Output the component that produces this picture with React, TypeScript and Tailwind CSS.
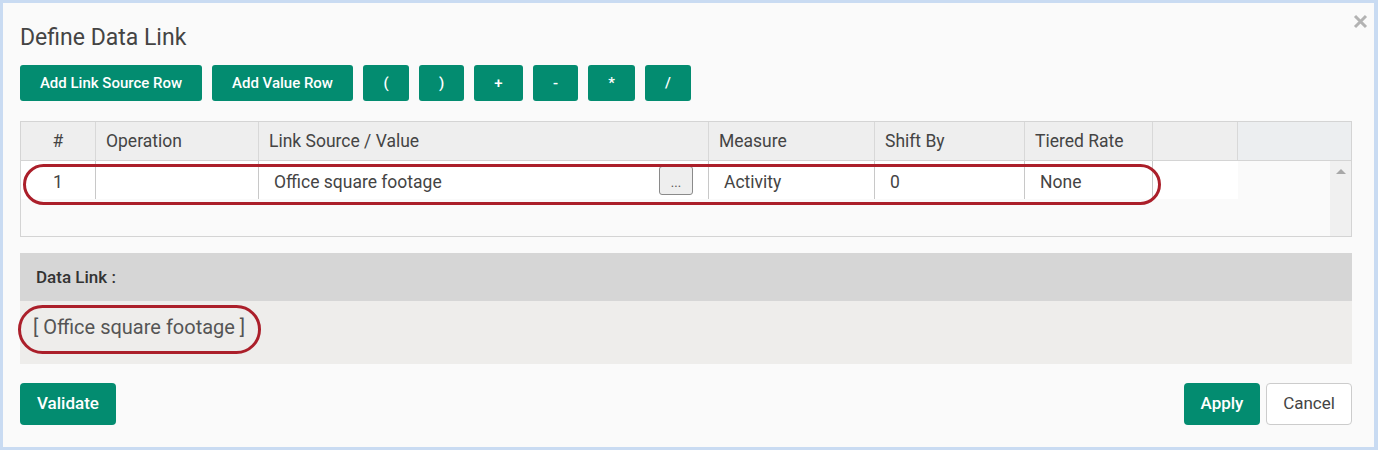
// Define Data Link dialog
const font = { fontFamily: 'Roboto, "Liberation Sans", sans-serif' };

const opButtons = [
  { label: 'Add Link Source Row', w: 'w-[182px]' },
  { label: 'Add Value Row', w: 'w-[141px]' },
  { label: '(', w: 'w-[46px]' },
  { label: ')', w: 'w-[45px]' },
  { label: '+', w: 'w-[49px]' },
  { label: '-', w: 'w-[45px]' },
  { label: '*', w: 'w-[47px]' },
  { label: '/', w: 'w-[46px]' },
];

const columns = [
  { label: '#', w: 'w-[75px]', center: true },
  { label: 'Operation', w: 'w-[163px]' },
  { label: 'Link Source / Value', w: 'w-[450px]' },
  { label: 'Measure', w: 'w-[166px]' },
  { label: 'Shift By', w: 'w-[150px]' },
  { label: 'Tiered Rate', w: 'w-[128px]' },
  { label: '', w: 'w-[85px]' },
];

export default function App() {
  return (
    <div className="w-[1378px] h-[450px] bg-[#c9dbf2] p-[3px] pr-[4px]" style={font}>
      <div className="relative w-full h-full bg-[#fafafa] px-[17px] pt-[20px]">
        {/* Close */}
        <button className="absolute right-[6px] top-[11px] w-[15px] h-[15px]">
          <svg viewBox="0 0 15 15" className="w-[15px] h-[15px]">
            <path d="M2 2 L13 13 M13 2 L2 13" stroke="#b3b3b3" strokeWidth="3" />
          </svg>
        </button>

        {/* Title */}
        <h2 className="text-[23px] leading-[30px] text-[#444] font-normal">Define Data Link</h2>

        {/* Operation buttons */}
        <div className="flex gap-[10px] mt-[12px]">
          {opButtons.map((b) => (
            <button
              key={b.label}
              className={`${b.w} h-[36px] rounded-[3px] bg-[#038c70] text-white text-[15px] font-medium`}
            >
              {b.label}
            </button>
          ))}
        </div>

        {/* Table */}
        <div className="mt-[20px] w-[1332px] h-[116px] border border-[#d4d4d4] bg-[#fafafa] flex flex-col">
          <div className="flex h-[39px] border-b border-[#d4d4d4] bg-[#eeeeee]">
            {columns.map((c, i) => (
              <div
                key={i}
                className={`${c.w} h-full flex items-center border-r border-[#d8d8d8] text-[17.5px] text-[#444] ${c.center ? 'justify-center' : 'pl-[10px]'}`}
              >
                {c.label}
              </div>
            ))}
            <div className="flex-1 bg-[#eceef0]" />
          </div>
          <div className="flex flex-1">
            <div className="w-[1217px]">
              <div className="relative flex h-[38px] bg-white text-[17.5px] text-[#444]">
                <div className="w-[75px] flex items-center justify-center pt-[5px] border-r border-[#c8c8c8]">1</div>
                <div className="w-[163px] border-r border-[#c8c8c8]" />
                <div className="w-[450px] flex items-center justify-between pl-[15px] pr-[15px] border-r border-[#c8c8c8]">
                  <span className="pt-[5px]">Office square footage</span>
                  <button className="w-[34px] h-[29px] mt-[1px] border border-[#8a8a8a] rounded-[3px] bg-[#eeeeee] text-[#555] text-[13px] leading-none pt-[4px]">...</button>
                </div>
                <div className="w-[166px] flex items-center pl-[15px] pt-[5px] border-r border-[#c8c8c8]">Activity</div>
                <div className="w-[150px] flex items-center pl-[15px] pt-[5px] border-r border-[#c8c8c8]">0</div>
                <div className="w-[128px] flex items-center pl-[15px] pt-[5px] border-r border-[#c8c8c8]">None</div>
                <div className="w-[85px]" />
                {/* highlight */}
                <div className="absolute left-[2px] top-[3px] w-[1138px] h-[41px] rounded-full border-[3px] border-[#ab1f2a] pointer-events-none" />
              </div>
            </div>
            <div className="flex-1" />
            <div className="w-[21px] bg-[#f0f0f0] flex justify-center pt-[8px]">
              <div className="w-0 h-0 border-l-[5px] border-r-[5px] border-b-[5px] border-l-transparent border-r-transparent border-b-[#a8a8a8]" />
            </div>
          </div>
        </div>

        {/* Data link */}
        <div className="mt-[16px] w-[1332px]">
          <div className="h-[48px] bg-[#d6d6d6] flex items-center pl-[16px] pt-[2px] text-[17px] text-[#333] font-medium">Data Link :</div>
          <div className="relative h-[63px] bg-[#eeedeb] pt-[14px] pl-[13px]">
            <span className="text-[20px] text-[#555] leading-[24px]">[ Office square footage ]</span>
            <div className="absolute -left-[2px] top-[4px] w-[243px] h-[49px] rounded-full border-[3px] border-[#ab1f2a] pointer-events-none" />
          </div>
        </div>

        {/* Footer */}
        <div className="mt-[19px] w-[1332px] flex items-center">
          <button className="w-[96px] h-[42px] rounded-[4px] bg-[#038c70] text-white text-[17px] font-medium">Validate</button>
          <div className="flex-1" />
          <button className="w-[76px] h-[42px] rounded-[4px] bg-[#038c70] text-white text-[17px] font-medium">Apply</button>
          <button className="ml-[6px] w-[86px] h-[42px] rounded-[4px] bg-white border border-[#cccccc] text-[#444] text-[17px]">Cancel</button>
        </div>
      </div>
    </div>
  );
}
